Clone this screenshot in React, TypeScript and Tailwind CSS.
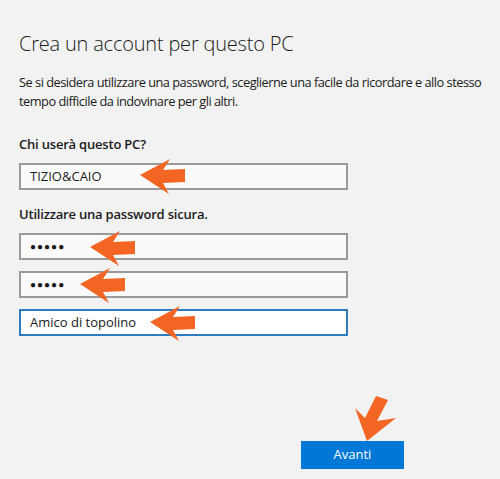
import React from "react"

const font = { fontFamily: '"Open Sans", "Noto Sans", sans-serif' }

const LeftArrow = ({ className }: { className: string }) => (
    <svg className={`absolute ${className}`} width="45" height="35" viewBox="0 0 45 35">
        <polygon points="0,16 30,0 23,11 45,10 45,23 23,24 29,35" fill="#f26522" />
    </svg>
)

const Field = ({ children, focus, arrow }: { children: React.ReactNode, focus?: boolean, arrow: string }) => (
    <div className="relative">
        <div className={`flex items-center h-[27px] w-[329px] border-2 ${focus ? "border-[#2f7bbf] bg-white" : "border-[#9a9a9a] bg-[#fafafa]"} px-[9px] text-[13px] text-[#1a1a1a]`}>
            {children}
        </div>
        <LeftArrow className={arrow} />
    </div>
)

const Dots = () => <span className="text-[10px] tracking-[1px]">{"\u25CF\u25CF\u25CF\u25CF\u25CF"}</span>

export default function App() {
    return (
        <div className="relative min-h-[479px] w-[500px] bg-[#f2f2f2] px-[19px] pt-[30px] text-[#1a1a1a]" style={font}>
            <h1 className="text-[20px] leading-[28px] font-light tracking-[-0.2px]">Crea un account per questo PC</h1>
            <p className="mt-[15px] w-[480px] text-[12.8px] leading-[19px] tracking-[-0.5px]">
                Se si desidera utilizzare una password, sceglierne una facile da ricordare e allo stesso tempo difficile da indovinare per gli altri.
            </p>
            <div className="mt-[24px] text-[13px] leading-[18px] font-semibold tracking-[-0.2px]">Chi userà questo PC?</div>
            <div className="mt-[10px]">
                <Field arrow="left-[121px] -top-[4px]">TIZIO&amp;CAIO</Field>
            </div>
            <div className="mt-[15px] text-[13px] leading-[18px] font-semibold tracking-[-0.2px]">Utilizzare una password sicura.</div>
            <div className="mt-[10px] flex flex-col gap-[11px]">
                <Field arrow="left-[71px] -top-[2px]"><Dots /></Field>
                <Field arrow="left-[61px] -top-[3px]"><Dots /></Field>
                <Field focus arrow="left-[131px] -top-[3px]">Amico di topolino</Field>
            </div>
            <div className="relative mt-[105px] flex justify-end pr-[77px]">
                <button className="h-[28px] w-[103px] bg-[#0078d7] text-[13px] text-white">Avanti</button>
                <svg className="absolute left-[333px] -top-[45px]" width="46" height="46" viewBox="0 0 46 46">
                    <polygon points="15,45 3,12 13,22 24,0 36,4 25,25 44,22" fill="#f26522" />
                </svg>
            </div>
        </div>
    )
}
